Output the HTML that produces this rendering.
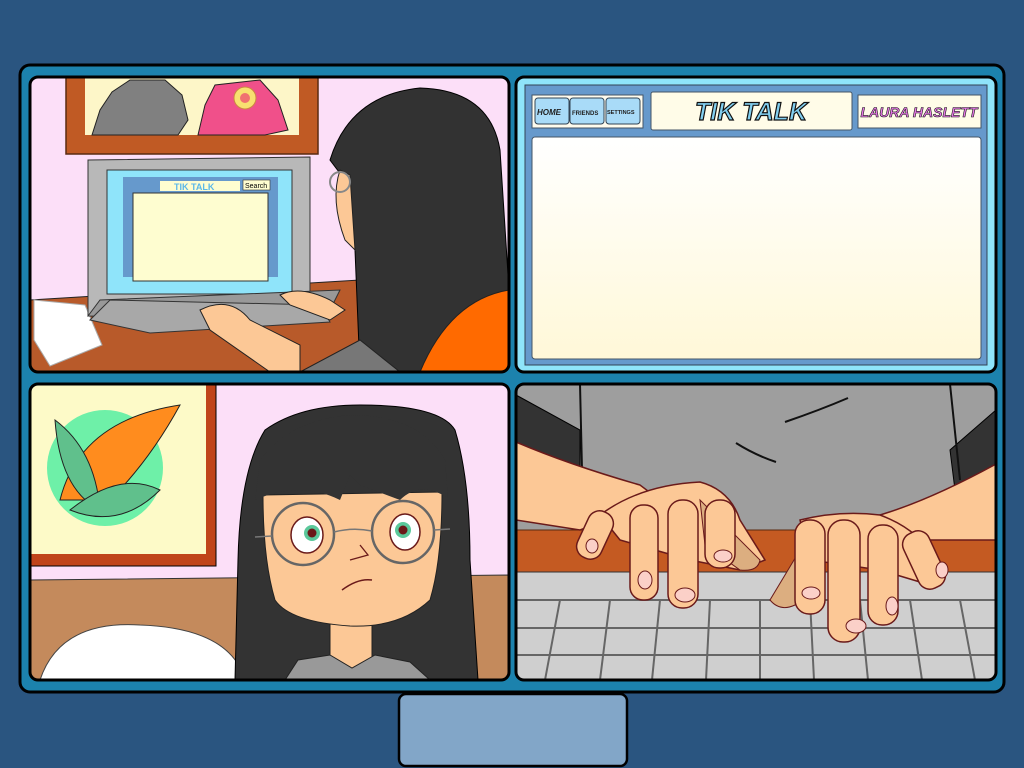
<!DOCTYPE html>
<html><head><meta charset="utf-8"><style>
html,body{margin:0;padding:0;background:#2a5580;width:1024px;height:768px;overflow:hidden}
svg{display:block}
text{font-family:"Liberation Sans",sans-serif}
</style></head><body>
<svg width="1024" height="768" viewBox="0 0 1024 768">
<defs>
<clipPath id="c1"><rect x="30" y="77" width="479" height="295" rx="8"/></clipPath>
<clipPath id="c3"><rect x="30" y="384" width="479" height="296" rx="8"/></clipPath>
<clipPath id="c4"><rect x="516" y="384" width="480" height="296" rx="8"/></clipPath>
<linearGradient id="cr" x1="0" y1="0" x2="0" y2="1"><stop offset="0" stop-color="#ffffff"/><stop offset="1" stop-color="#fff8d8"/></linearGradient>
</defs>
<rect width="1024" height="768" fill="#2a5580"/>
<rect x="20" y="65" width="984" height="627" rx="10" fill="#1c82ad" stroke="#000" stroke-width="3"/>
<rect x="399" y="694" width="228" height="72" rx="7" fill="#82a6c8" stroke="#000" stroke-width="2.5"/>

<!-- Panel 1 -->
<g clip-path="url(#c1)">
<rect x="30" y="77" width="479" height="295" fill="#fcdff8"/>
<rect x="66" y="70" width="252" height="84" fill="#c05a24" stroke="#5a2a10" stroke-width="1.5"/>
<rect x="85" y="70" width="214" height="65" fill="#fdf6c8"/>
<path d="M92 135 L100 110 L112 92 L130 80 L165 80 L182 95 L188 120 L178 135Z" fill="#808080" stroke="#222"/>
<path d="M198 135 L205 105 L215 85 L260 80 L278 100 L288 130 L265 135Z" fill="#f0508a" stroke="#222"/>
<circle cx="245" cy="98" r="11" fill="#f8e070" stroke="#c84"/><circle cx="245" cy="98" r="5" fill="#f07070"/>
<path d="M30 300 L360 280 L509 290 L509 372 L30 372Z" fill="#b85a2a" stroke="#222"/>
<path d="M34 300 L85 305 L102 345 L50 366 L34 340Z" fill="#fff" stroke="#aaa"/>
<path d="M88 160 L310 157 L310 320 L88 316Z" fill="#b8b8b8" stroke="#333"/>
<rect x="107" y="170" width="185" height="124" fill="#8fe4fa" stroke="#333"/>
<rect x="123" y="177" width="155" height="100" fill="#6699cc"/>
<rect x="133" y="193" width="135" height="88" fill="#fefdd0" stroke="#333"/>
<rect x="160" y="181" width="80" height="10" fill="#fefdd0"/>
<text x="174" y="190" font-size="9" font-weight="bold" fill="#5bb8e8">TIK TALK</text>
<rect x="243" y="180" width="27" height="10" fill="#fefdd0" stroke="#333" stroke-width=".6"/>
<text x="245" y="188" font-size="7" font-family="Liberation Serif">Search</text>
<path d="M88 316 L310 318 L330 310 L340 290 L100 300Z" fill="#999" stroke="#333"/>
<path d="M90 320 L150 333 L330 322 L320 305 L110 300Z" fill="#a8a8a8" stroke="#333"/>
<path d="M330 160 Q350 95 420 88 Q490 90 500 150 L509 290 L509 372 L360 372 L355 250 Q340 220 345 180Z" fill="#323232" stroke="#000"/>
<path d="M340 170 Q330 200 345 240 L355 250 L350 175Z" fill="#fcc896" stroke="#222"/>
<circle cx="340" cy="182" r="10" fill="none" stroke="#888" stroke-width="2"/>
<path d="M300 372 L360 340 L400 372Z" fill="#777" stroke="#222"/>
<path d="M420 372 Q450 300 509 290 L509 372Z" fill="#ff6a00" stroke="#222"/>
<path d="M200 310 Q230 295 250 320 L300 345 L300 372 L270 372 L210 330Z" fill="#fcc896" stroke="#222"/>
<path d="M280 295 Q300 285 330 300 L345 310 L330 320 L290 305Z" fill="#fcc896" stroke="#222"/>
</g>
<rect x="30" y="77" width="479" height="295" rx="8" fill="none" stroke="#000" stroke-width="3"/>

<!-- Panel 2 -->
<rect x="516" y="77" width="480" height="295" rx="8" fill="#8fe4fa" stroke="#000" stroke-width="3"/>
<rect x="525" y="85" width="462" height="280" fill="#6699cc" stroke="#345" stroke-width="1"/>
<rect x="532" y="95" width="111" height="33" fill="#fffcee" stroke="#456"/>
<rect x="535" y="98" width="34" height="26" rx="3" fill="#a9dbf8" stroke="#345"/>
<rect x="570" y="98" width="34" height="26" rx="3" fill="#a9dbf8" stroke="#345"/>
<rect x="606" y="98" width="34" height="26" rx="3" fill="#a9dbf8" stroke="#345"/>
<text x="537" y="115" font-size="8" font-weight="bold" font-style="italic" fill="#222">HOME</text>
<text x="572" y="115" font-size="6" font-weight="bold" fill="#222">FRIENDS</text>
<text x="607" y="114" font-size="5.5" font-weight="bold" fill="#222">SETTINGS</text>
<rect x="651" y="92" width="201" height="38" rx="2" fill="#fffce8" stroke="#456"/>
<text x="751" y="120" font-size="25" font-weight="bold" font-style="italic" text-anchor="middle" fill="#82cff0" stroke="#111" stroke-width="1.2">TIK TALK</text>
<rect x="858" y="95" width="123" height="33" fill="#fffce8" stroke="#456"/>
<text x="919" y="117" font-size="14" font-weight="bold" font-style="italic" text-anchor="middle" fill="#e87ae8" stroke="#111" stroke-width=".6">LAURA HASLETT</text>
<rect x="532" y="137" width="449" height="222" rx="3" fill="url(#cr)" stroke="#456"/>

<!-- Panel 3 -->
<g clip-path="url(#c3)">
<rect x="30" y="384" width="479" height="296" fill="#fcdff8"/>
<rect x="20" y="378" width="196" height="188" fill="#c0441a" stroke="#000"/>
<rect x="30" y="384" width="176" height="170" fill="#fdfac8"/>
<circle cx="105" cy="468" r="58" fill="#6ef0a8"/>
<path d="M60 500 Q80 420 180 405 Q150 460 110 500Z" fill="#ff8c1e" stroke="#222"/>
<path d="M55 420 Q95 450 100 510 Q60 490 55 420Z" fill="#60c08c" stroke="#222"/>
<path d="M70 510 Q120 470 160 490 Q120 530 70 510Z" fill="#60c08c" stroke="#222"/>
<path d="M30 580 L509 575 L509 680 L30 680Z" fill="#c48a5c" stroke="#333"/>
<path d="M40 680 Q60 620 140 625 Q230 628 245 680Z" fill="#fff" stroke="#444"/>
<path d="M235 680 L238 560 Q240 470 265 430 Q300 405 360 405 Q440 405 455 430 Q470 480 470 560 L478 680Z" fill="#333" stroke="#000"/>
<rect x="330" y="600" width="42" height="70" rx="14" fill="#fcc896" stroke="#222"/>
<path d="M263 495 L442 492 Q442 560 430 600 Q400 628 350 626 Q290 622 275 600 Q263 560 263 495Z" fill="#fcc896" stroke="#222"/>
<path d="M285 680 L298 660 L330 655 L352 668 L375 655 L410 662 L430 680Z" fill="#999" stroke="#222"/>
<path d="M255 500 L260 460 Q290 420 350 415 Q420 415 445 460 L448 498 Q420 480 400 500 L360 485 L350 475 L340 500 Q300 480 255 500Z" fill="#333"/>
<ellipse cx="307" cy="535" rx="16" ry="18" fill="#fff" stroke="#6a1a1a" stroke-width="1.5"/>
<ellipse cx="405" cy="532" rx="15" ry="18" fill="#fff" stroke="#6a1a1a" stroke-width="1.5"/>
<circle cx="312" cy="533" r="8" fill="#5ac89a"/><circle cx="312" cy="533" r="4.5" fill="#6a1818"/>
<circle cx="403" cy="530" r="8" fill="#5ac89a"/><circle cx="403" cy="530" r="4.5" fill="#6a1818"/>
<circle cx="303" cy="534" r="31" fill="none" stroke="#666" stroke-width="2.5"/>
<circle cx="403" cy="532" r="31" fill="none" stroke="#666" stroke-width="2.5"/>
<path d="M334 532 Q353 527 372 531 M272 536 L255 537 M434 530 L450 529" fill="none" stroke="#777" stroke-width="1.5"/>
<path d="M360 545 L368 555 L350 560" fill="none" stroke="#6a1a1a" stroke-width="1.3"/>
<path d="M342 590 Q358 578 372 580" fill="none" stroke="#6a1a1a" stroke-width="1.5"/>
</g>
<rect x="30" y="384" width="479" height="296" rx="8" fill="none" stroke="#000" stroke-width="3"/>

<!-- Panel 4 -->
<g clip-path="url(#c4)">
<rect x="516" y="384" width="480" height="296" fill="#9e9e9e"/>
<path d="M516 395 L580 430 L580 470 L516 450Z" fill="#333" stroke="#000"/>
<path d="M996 410 L950 450 L955 490 L996 470Z" fill="#333" stroke="#000"/>
<path d="M580 384 L582 470 M950 384 L960 480" stroke="#111" stroke-width="2"/>
<path d="M785 422 Q820 410 848 398 M736 443 Q755 455 776 462" stroke="#111" stroke-width="2" fill="none"/>
<rect x="516" y="530" width="480" height="44" fill="#c45a22" stroke="#5a2a10"/>
<rect x="516" y="572" width="480" height="108" fill="#cfcfcf" stroke="#333"/>
<g stroke="#666" stroke-width="2">
<path d="M516 600 L996 600 M516 628 L996 628 M516 655 L996 655"/>
<path d="M560 600 L545 680 M610 600 L600 680 M660 600 L652 680 M710 600 L706 680 M760 600 L760 680 M810 600 L814 680 M860 600 L868 680 M910 600 L922 680 M960 600 L975 680"/>
</g>
<path d="M516 442 Q570 465 640 485 L660 500 L580 530 L516 520Z" fill="#fcc896" stroke="#6a1a1a" stroke-width="1.5"/>
<path d="M996 464 Q930 500 880 515 L900 540 L996 540Z" fill="#fcc896" stroke="#6a1a1a" stroke-width="1.5"/>
<path d="M600 515 Q640 485 700 482 Q730 490 740 520 L765 560 L740 570 L690 560 L620 540Z" fill="#fcc896" stroke="#6a1a1a" stroke-width="1.5"/>
<path d="M700 500 L760 560 Q758 572 740 570 L705 545Z" fill="#dcae80" stroke="#6a1a1a"/>
<path d="M800 520 Q840 510 880 515 Q920 530 935 560 L945 575 L930 585 L880 570 L810 560Z" fill="#fcc896" stroke="#6a1a1a" stroke-width="1.5"/>
<path d="M800 550 L770 600 Q780 612 795 605 L815 570Z" fill="#dcae80" stroke="#6a1a1a"/>
<g fill="#fcc896" stroke="#6a1a1a" stroke-width="1.5">
<rect x="582" y="510" width="26" height="50" rx="12" transform="rotate(25 595 535)"/>
<rect x="630" y="505" width="28" height="95" rx="13"/>
<rect x="668" y="500" width="30" height="108" rx="14"/>
<rect x="705" y="500" width="30" height="68" rx="14"/>
<rect x="795" y="520" width="30" height="94" rx="14"/>
<rect x="828" y="520" width="32" height="122" rx="15"/>
<rect x="868" y="525" width="30" height="100" rx="14"/>
<rect x="910" y="530" width="28" height="60" rx="12" transform="rotate(-25 924 560)"/>
</g>
<g fill="#fbd0c8" stroke="#6a1a1a">
<ellipse cx="592" cy="546" rx="6" ry="7"/><ellipse cx="645" cy="580" rx="7" ry="9"/>
<ellipse cx="685" cy="595" rx="10" ry="7"/><ellipse cx="723" cy="556" rx="9" ry="6"/>
<ellipse cx="811" cy="593" rx="9" ry="6"/><ellipse cx="856" cy="626" rx="10" ry="7"/>
<ellipse cx="892" cy="606" rx="6" ry="9"/><ellipse cx="942" cy="570" rx="6" ry="8"/>
</g>
</g>
<rect x="516" y="384" width="480" height="296" rx="8" fill="none" stroke="#000" stroke-width="3"/>
</svg>
</body></html>
